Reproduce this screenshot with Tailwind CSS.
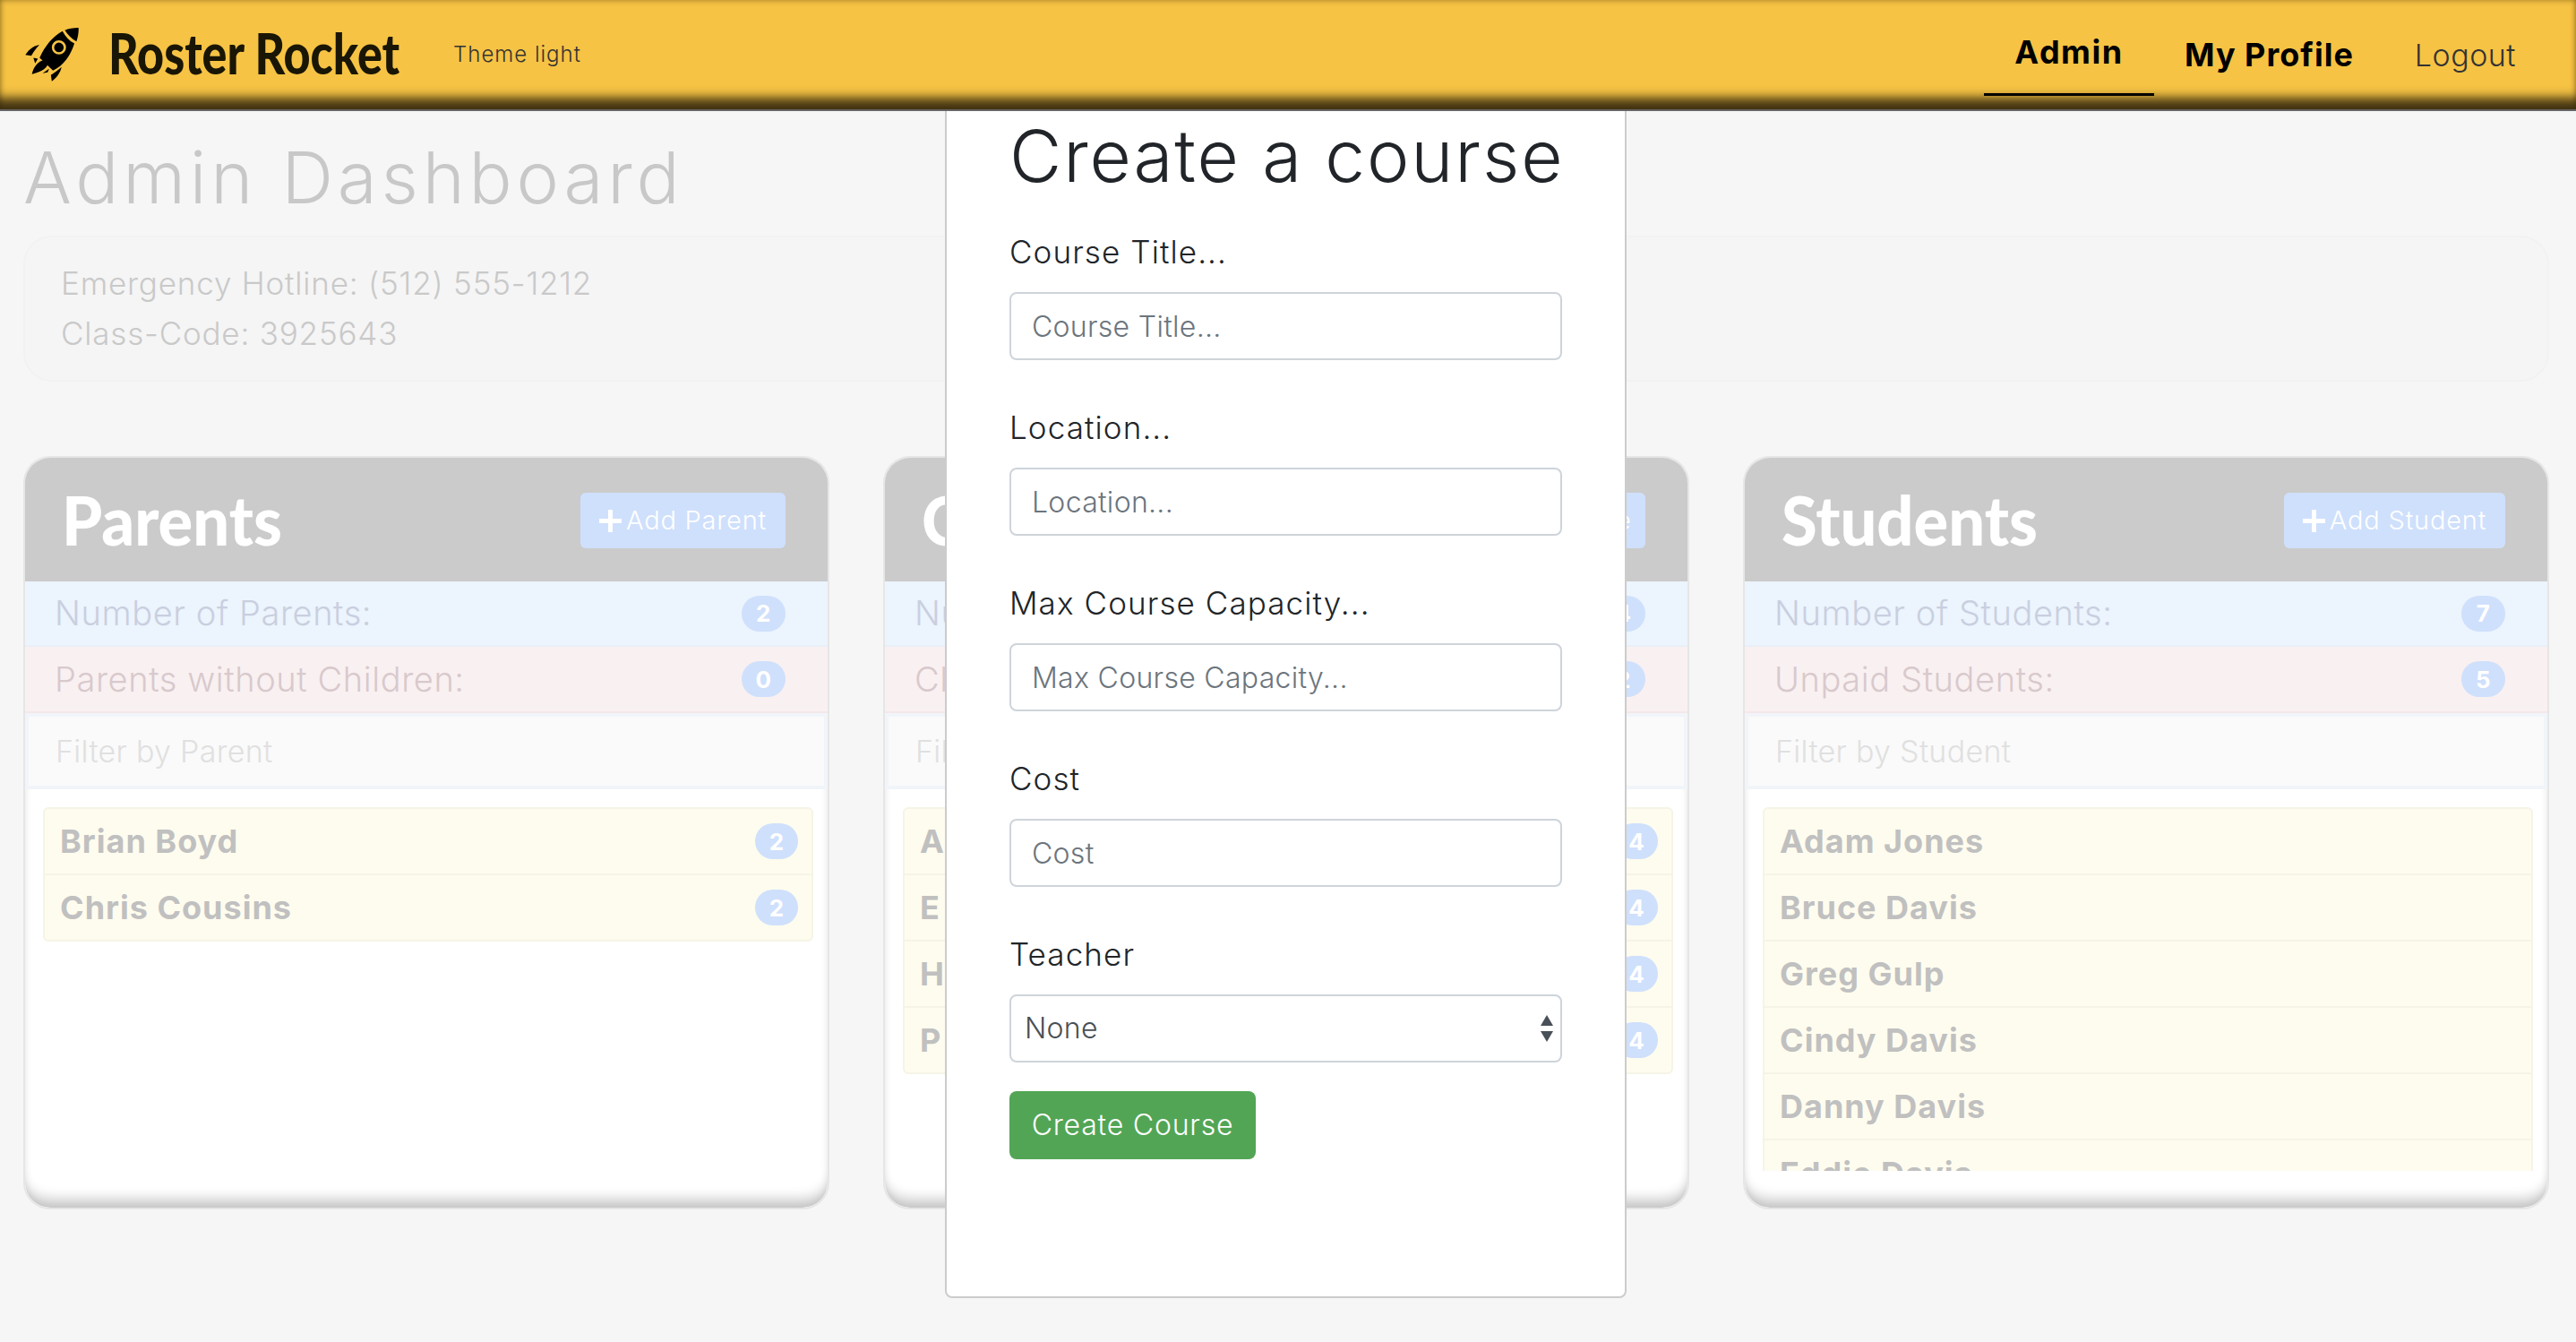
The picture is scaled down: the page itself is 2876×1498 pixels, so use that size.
<!DOCTYPE html>
<html lang="en">
<head>
<meta charset="UTF-8">
<title>Roster Rocket</title>
<script src="https://cdn.jsdelivr.net/npm/@tailwindcss/browser@4"></script>
</head>
<body class="relative h-[1498px] overflow-hidden bg-[#f6f6f6] font-['Inter',sans-serif]">

<!-- Navbar -->
<header class="relative z-20 flex h-[124px] items-center border-b-2 border-[#666] bg-[#f6c344] pl-[28px] pr-[67px] shadow-[inset_0_-20px_12px_-7px_rgba(40,30,10,0.85),inset_0_0_6px_rgba(60,40,0,0.5)]">
    <svg class="h-[60px] w-[60px]" viewBox="84 84 181 181" fill="#000">
        <path d="M264 84C245 84 230 87 218 92C228 108 240 120 257 130C262 115 265 100 264 84Z"/>
        <path d="M210 95C180 110 150 145 133 185L178 228C215 212 238 175 250 137C232 127 220 113 210 95Z"/>
        <circle cx="198" cy="150" r="20" fill="#000" stroke="#f6c344" stroke-width="8"/>
        <path d="M132 141C110 145 95 160 85 175L105 178C115 160 125 150 132 141Z"/>
        <path d="M207 216C203 235 190 253 174 264L171 243C185 235 197 225 207 216Z"/>
        <path d="M107 240C112 215 130 195 150 192L162 205C155 225 130 235 107 240Z"/>
        <path d="M112 185L127 188L118 204Z"/>
        <path d="M143 237L165 222L160 234Z"/>
    </svg>
    <span class="-mt-[4px] ml-[33px] w-[326px] origin-left scale-x-[0.84] font-['Lato',sans-serif] text-[62px] font-black whitespace-nowrap text-[#1a1605]">Roster Rocket</span>
    <span class="ml-[59px] text-[24px] font-light tracking-[1px] text-[#333]">Theme light</span>
    <nav class="ml-auto flex items-center">
        <a class="-mt-[4px] flex h-[96px] w-[190px] items-center justify-center border-b-[3px] border-black text-[36px] font-bold tracking-[1.5px] text-black">Admin</a>
        <a class="ml-[34px] text-[36px] font-bold tracking-[1px] text-black">My Profile</a>
        <a class="ml-[68px] text-[34px] font-light tracking-[0.5px] text-[#333]">Logout</a>
    </nav>
</header>

<main class="pr-[30px] pl-[26px]">
    <h1 class="mt-[24px] text-[80px] leading-[100px] font-light tracking-[4.8px] text-[#c8c8c8]">Admin Dashboard</h1>

    <div class="mt-[15px] h-[163px] rounded-[32px] border-2 border-[#f2f2f2] bg-[#f5f5f5] px-[40px] py-[23px] text-[35px] leading-[56px] font-light tracking-[0.8px] text-[#c9c9c9]">
        <p>Emergency Hotline: (512) 555-1212</p>
        <p>Class-Code: 3925643</p>
    </div>

    <div class="mt-[83px] grid grid-cols-3 gap-x-[60px]">

        <!-- Parents -->
        <section class="flex h-[841px] flex-col overflow-hidden rounded-[30px] border-2 border-[#e6e6e6] bg-white shadow-[inset_0_-18px_14px_-8px_rgba(0,0,0,0.2),inset_0_0_8px_rgba(0,0,0,0.08)]">
            <div class="flex h-[138px] shrink-0 items-center justify-between bg-[#cbcbcb] pr-[47px] pl-[41px]">
                <h2 class="origin-left scale-x-[0.95] font-['Lato',sans-serif] text-[76px] font-black text-white">Parents</h2>
                <button class="mt-[2px] flex h-[62px] w-[229px] items-center justify-center gap-[5px] rounded-[6px] bg-[#cfe0fc] text-[29px] font-light tracking-[0.8px] text-white"><svg class="h-[25px] w-[25px]" viewBox="0 0 25 25" fill="#fff"><path d="M10 0h5v10h10v5H15v10h-5V15H0v-5h10z"/></svg>Add Parent</button>
            </div>
            <div class="flex h-[73px] shrink-0 items-center justify-between border-b-2 border-[#e8eff7] bg-[#ecf4fd] pr-[47px] pl-[33px] text-[38px] font-light tracking-[0.6px] text-[#c9cfdf]">Number of Parents:<span class="flex h-[40px] w-[49px] items-center justify-center rounded-full bg-[#cfe0fc] text-[26px] font-bold text-white">2</span></div>
            <div class="flex h-[74px] shrink-0 items-center justify-between border-b-2 border-[#f5e8ea] bg-[#f9f0f1] pr-[47px] pl-[33px] text-[38px] font-light tracking-[0.6px] text-[#d8c9cc]">Parents without Children:<span class="flex h-[40px] w-[49px] items-center justify-center rounded-full bg-[#cfe0fc] text-[26px] font-bold text-white">0</span></div>
            <div class="flex h-[85px] shrink-0 items-center border-4 border-[#f1f5f9] bg-[#fafafa] pl-[30px] text-[34px] font-light tracking-[0.3px] text-[#e0e0e0]">Filter by Parent</div>
            <ul class="mt-[20px] mr-[16px] ml-[20px] max-h-[406px] overflow-hidden rounded-[6px] border-2 border-[#f6f4e6] bg-[#fefcee] text-[36px] font-bold tracking-[1px] text-[#c0c0c0]">
                <li class="flex h-[74px] items-center justify-between border-b-2 border-[#f6f4e6] pr-[15px] pl-[17px]">Brian Boyd<span class="flex h-[40px] w-[48px] items-center justify-center rounded-full bg-[#cfe0fc] text-[26px] tracking-normal text-white">2</span></li>
                <li class="flex h-[72px] items-center justify-between pr-[15px] pl-[17px]">Chris Cousins<span class="flex h-[40px] w-[48px] items-center justify-center rounded-full bg-[#cfe0fc] text-[26px] tracking-normal text-white">2</span></li>
            </ul>
        </section>

        <!-- Courses, mostly behind the modal -->
        <section class="flex h-[841px] flex-col overflow-hidden rounded-[30px] border-2 border-[#e6e6e6] bg-white shadow-[inset_0_-18px_14px_-8px_rgba(0,0,0,0.2),inset_0_0_8px_rgba(0,0,0,0.08)]">
            <div class="flex h-[138px] shrink-0 items-center justify-between bg-[#cbcbcb] pr-[47px] pl-[41px]">
                <h2 class="origin-left scale-x-[0.95] font-['Lato',sans-serif] text-[76px] font-black text-white">Courses</h2>
                <button class="mt-[2px] flex h-[62px] w-[229px] items-center justify-center gap-[5px] rounded-[6px] bg-[#cfe0fc] text-[29px] font-light tracking-[0.8px] text-white"><svg class="h-[25px] w-[25px]" viewBox="0 0 25 25" fill="#fff"><path d="M10 0h5v10h10v5H15v10h-5V15H0v-5h10z"/></svg>Add Course</button>
            </div>
            <div class="flex h-[73px] shrink-0 items-center justify-between border-b-2 border-[#e8eff7] bg-[#ecf4fd] pr-[47px] pl-[33px] text-[38px] font-light tracking-[0.6px] text-[#c9cfdf]">Number of Courses:<span class="flex h-[40px] w-[49px] items-center justify-center rounded-full bg-[#cfe0fc] text-[26px] font-bold text-white">4</span></div>
            <div class="flex h-[74px] shrink-0 items-center justify-between border-b-2 border-[#f5e8ea] bg-[#f9f0f1] pr-[47px] pl-[33px] text-[38px] font-light tracking-[0.6px] text-[#d8c9cc]">Classes without Teachers:<span class="flex h-[40px] w-[49px] items-center justify-center rounded-full bg-[#cfe0fc] text-[26px] font-bold text-white">2</span></div>
            <div class="flex h-[85px] shrink-0 items-center border-4 border-[#f1f5f9] bg-[#fafafa] pl-[30px] text-[34px] font-light tracking-[0.3px] text-[#e0e0e0]">Filter by Course</div>
            <ul class="mt-[20px] mr-[16px] ml-[20px] max-h-[406px] overflow-hidden rounded-[6px] border-2 border-[#f6f4e6] bg-[#fefcee] text-[36px] font-bold tracking-[5px] text-[#c0c0c0]">
                <li class="flex h-[74px] items-center justify-between border-b-2 border-[#f6f4e6] pr-[15px] pl-[17px]">Algebra<span class="flex h-[40px] w-[48px] items-center justify-center rounded-full bg-[#cfe0fc] text-[26px] tracking-normal text-white">4</span></li>
                <li class="flex h-[74px] items-center justify-between border-b-2 border-[#f6f4e6] pr-[15px] pl-[17px]">English<span class="flex h-[40px] w-[48px] items-center justify-center rounded-full bg-[#cfe0fc] text-[26px] tracking-normal text-white">4</span></li>
                <li class="flex h-[74px] items-center justify-between border-b-2 border-[#f6f4e6] pr-[15px] pl-[17px]">History<span class="flex h-[40px] w-[48px] items-center justify-center rounded-full bg-[#cfe0fc] text-[26px] tracking-normal text-white">4</span></li>
                <li class="flex h-[72px] items-center justify-between pr-[15px] pl-[17px]">Physics<span class="flex h-[40px] w-[48px] items-center justify-center rounded-full bg-[#cfe0fc] text-[26px] tracking-normal text-white">4</span></li>
            </ul>
        </section>

        <!-- Students -->
        <section class="flex h-[841px] flex-col overflow-hidden rounded-[30px] border-2 border-[#e6e6e6] bg-white shadow-[inset_0_-18px_14px_-8px_rgba(0,0,0,0.2),inset_0_0_8px_rgba(0,0,0,0.08)]">
            <div class="flex h-[138px] shrink-0 items-center justify-between bg-[#cbcbcb] pr-[47px] pl-[41px]">
                <h2 class="origin-left scale-x-[0.95] font-['Lato',sans-serif] text-[76px] font-black text-white">Students</h2>
                <button class="mt-[2px] flex h-[62px] w-[247px] items-center justify-center gap-[5px] rounded-[6px] bg-[#cfe0fc] text-[29px] font-light tracking-[0.8px] text-white"><svg class="h-[25px] w-[25px]" viewBox="0 0 25 25" fill="#fff"><path d="M10 0h5v10h10v5H15v10h-5V15H0v-5h10z"/></svg>Add Student</button>
            </div>
            <div class="flex h-[73px] shrink-0 items-center justify-between border-b-2 border-[#e8eff7] bg-[#ecf4fd] pr-[47px] pl-[33px] text-[38px] font-light tracking-[0.6px] text-[#c9cfdf]">Number of Students:<span class="flex h-[40px] w-[49px] items-center justify-center rounded-full bg-[#cfe0fc] text-[26px] font-bold text-white">7</span></div>
            <div class="flex h-[74px] shrink-0 items-center justify-between border-b-2 border-[#f5e8ea] bg-[#f9f0f1] pr-[47px] pl-[33px] text-[38px] font-light tracking-[0.6px] text-[#d8c9cc]">Unpaid Students:<span class="flex h-[40px] w-[49px] items-center justify-center rounded-full bg-[#cfe0fc] text-[26px] font-bold text-white">5</span></div>
            <div class="flex h-[85px] shrink-0 items-center border-4 border-[#f1f5f9] bg-[#fafafa] pl-[30px] text-[34px] font-light tracking-[0.3px] text-[#e0e0e0]">Filter by Student</div>
            <ul class="mt-[20px] mr-[16px] ml-[20px] h-[406px] overflow-hidden rounded-t-[6px] border-x-2 border-t-2 border-[#f6f4e6] bg-[#fefcee] text-[36px] font-bold tracking-[1px] text-[#c0c0c0]">
                <li class="flex h-[74px] items-center border-b-2 border-[#f6f4e6] pl-[17px]">Adam Jones</li>
                <li class="flex h-[74px] items-center border-b-2 border-[#f6f4e6] pl-[17px]">Bruce Davis</li>
                <li class="flex h-[74px] items-center border-b-2 border-[#f6f4e6] pl-[17px]">Greg Gulp</li>
                <li class="flex h-[74px] items-center border-b-2 border-[#f6f4e6] pl-[17px]">Cindy Davis</li>
                <li class="flex h-[74px] items-center border-b-2 border-[#f6f4e6] pl-[17px]">Danny Davis</li>
                <li class="flex h-[74px] items-center pl-[17px]">Eddie Davis</li>
            </ul>
        </section>
    </div>
</main>

<!-- Modal -->
<div class="absolute top-0 left-[1055px] z-10 h-[1449px] w-[761px] rounded-[8px] border-2 border-[#ccc] bg-white px-[70px] pt-[124px]">
    <h2 class="text-[80px] leading-[96px] font-light tracking-[1.9px] whitespace-nowrap text-[#212529]">Create a course</h2>
    <form class="mt-[34px] text-[35px] font-light tracking-[1.1px] text-[#212529]">
        <label class="block leading-[50px]">Course Title...</label>
        <input class="mt-[20px] mb-[50px] block h-[76px] w-full rounded-[8px] border-2 border-[#ced4da] px-[23px] text-[32px] font-light tracking-[0.3px] placeholder:text-[#6c757d]" placeholder="Course Title...">
        <label class="block leading-[50px]">Location...</label>
        <input class="mt-[20px] mb-[50px] block h-[76px] w-full rounded-[8px] border-2 border-[#ced4da] px-[23px] text-[32px] font-light tracking-[0.3px] placeholder:text-[#6c757d]" placeholder="Location...">
        <label class="block leading-[50px]">Max Course Capacity...</label>
        <input class="mt-[20px] mb-[50px] block h-[76px] w-full rounded-[8px] border-2 border-[#ced4da] px-[23px] text-[32px] font-light tracking-[0.3px] placeholder:text-[#6c757d]" placeholder="Max Course Capacity...">
        <label class="block leading-[50px]">Cost</label>
        <input class="mt-[20px] mb-[50px] block h-[76px] w-full rounded-[8px] border-2 border-[#ced4da] px-[23px] text-[32px] font-light tracking-[0.3px] placeholder:text-[#6c757d]" placeholder="Cost">
        <label class="block leading-[50px]">Teacher</label>
        <div class="relative mt-[20px] h-[76px]">
            <select class="block h-full w-full appearance-none rounded-[8px] border-2 border-[#ced4da] bg-white px-[15px] text-[32px] font-light tracking-[0.3px] text-[#495057]"><option>None</option></select>
            <svg class="absolute top-[23px] right-[9px] h-[30px] w-[16px]" viewBox="0 0 16 30" fill="#495057"><path d="M8 0L15 12H1Z"/><path d="M8 30L15 18H1Z"/></svg>
        </div>
        <button type="button" class="mt-[32px] h-[76px] w-[275px] rounded-[8px] bg-[#52a555] text-[32px] font-light tracking-[0.8px] text-white">Create Course</button>
    </form>
</div>

</body>
</html>
